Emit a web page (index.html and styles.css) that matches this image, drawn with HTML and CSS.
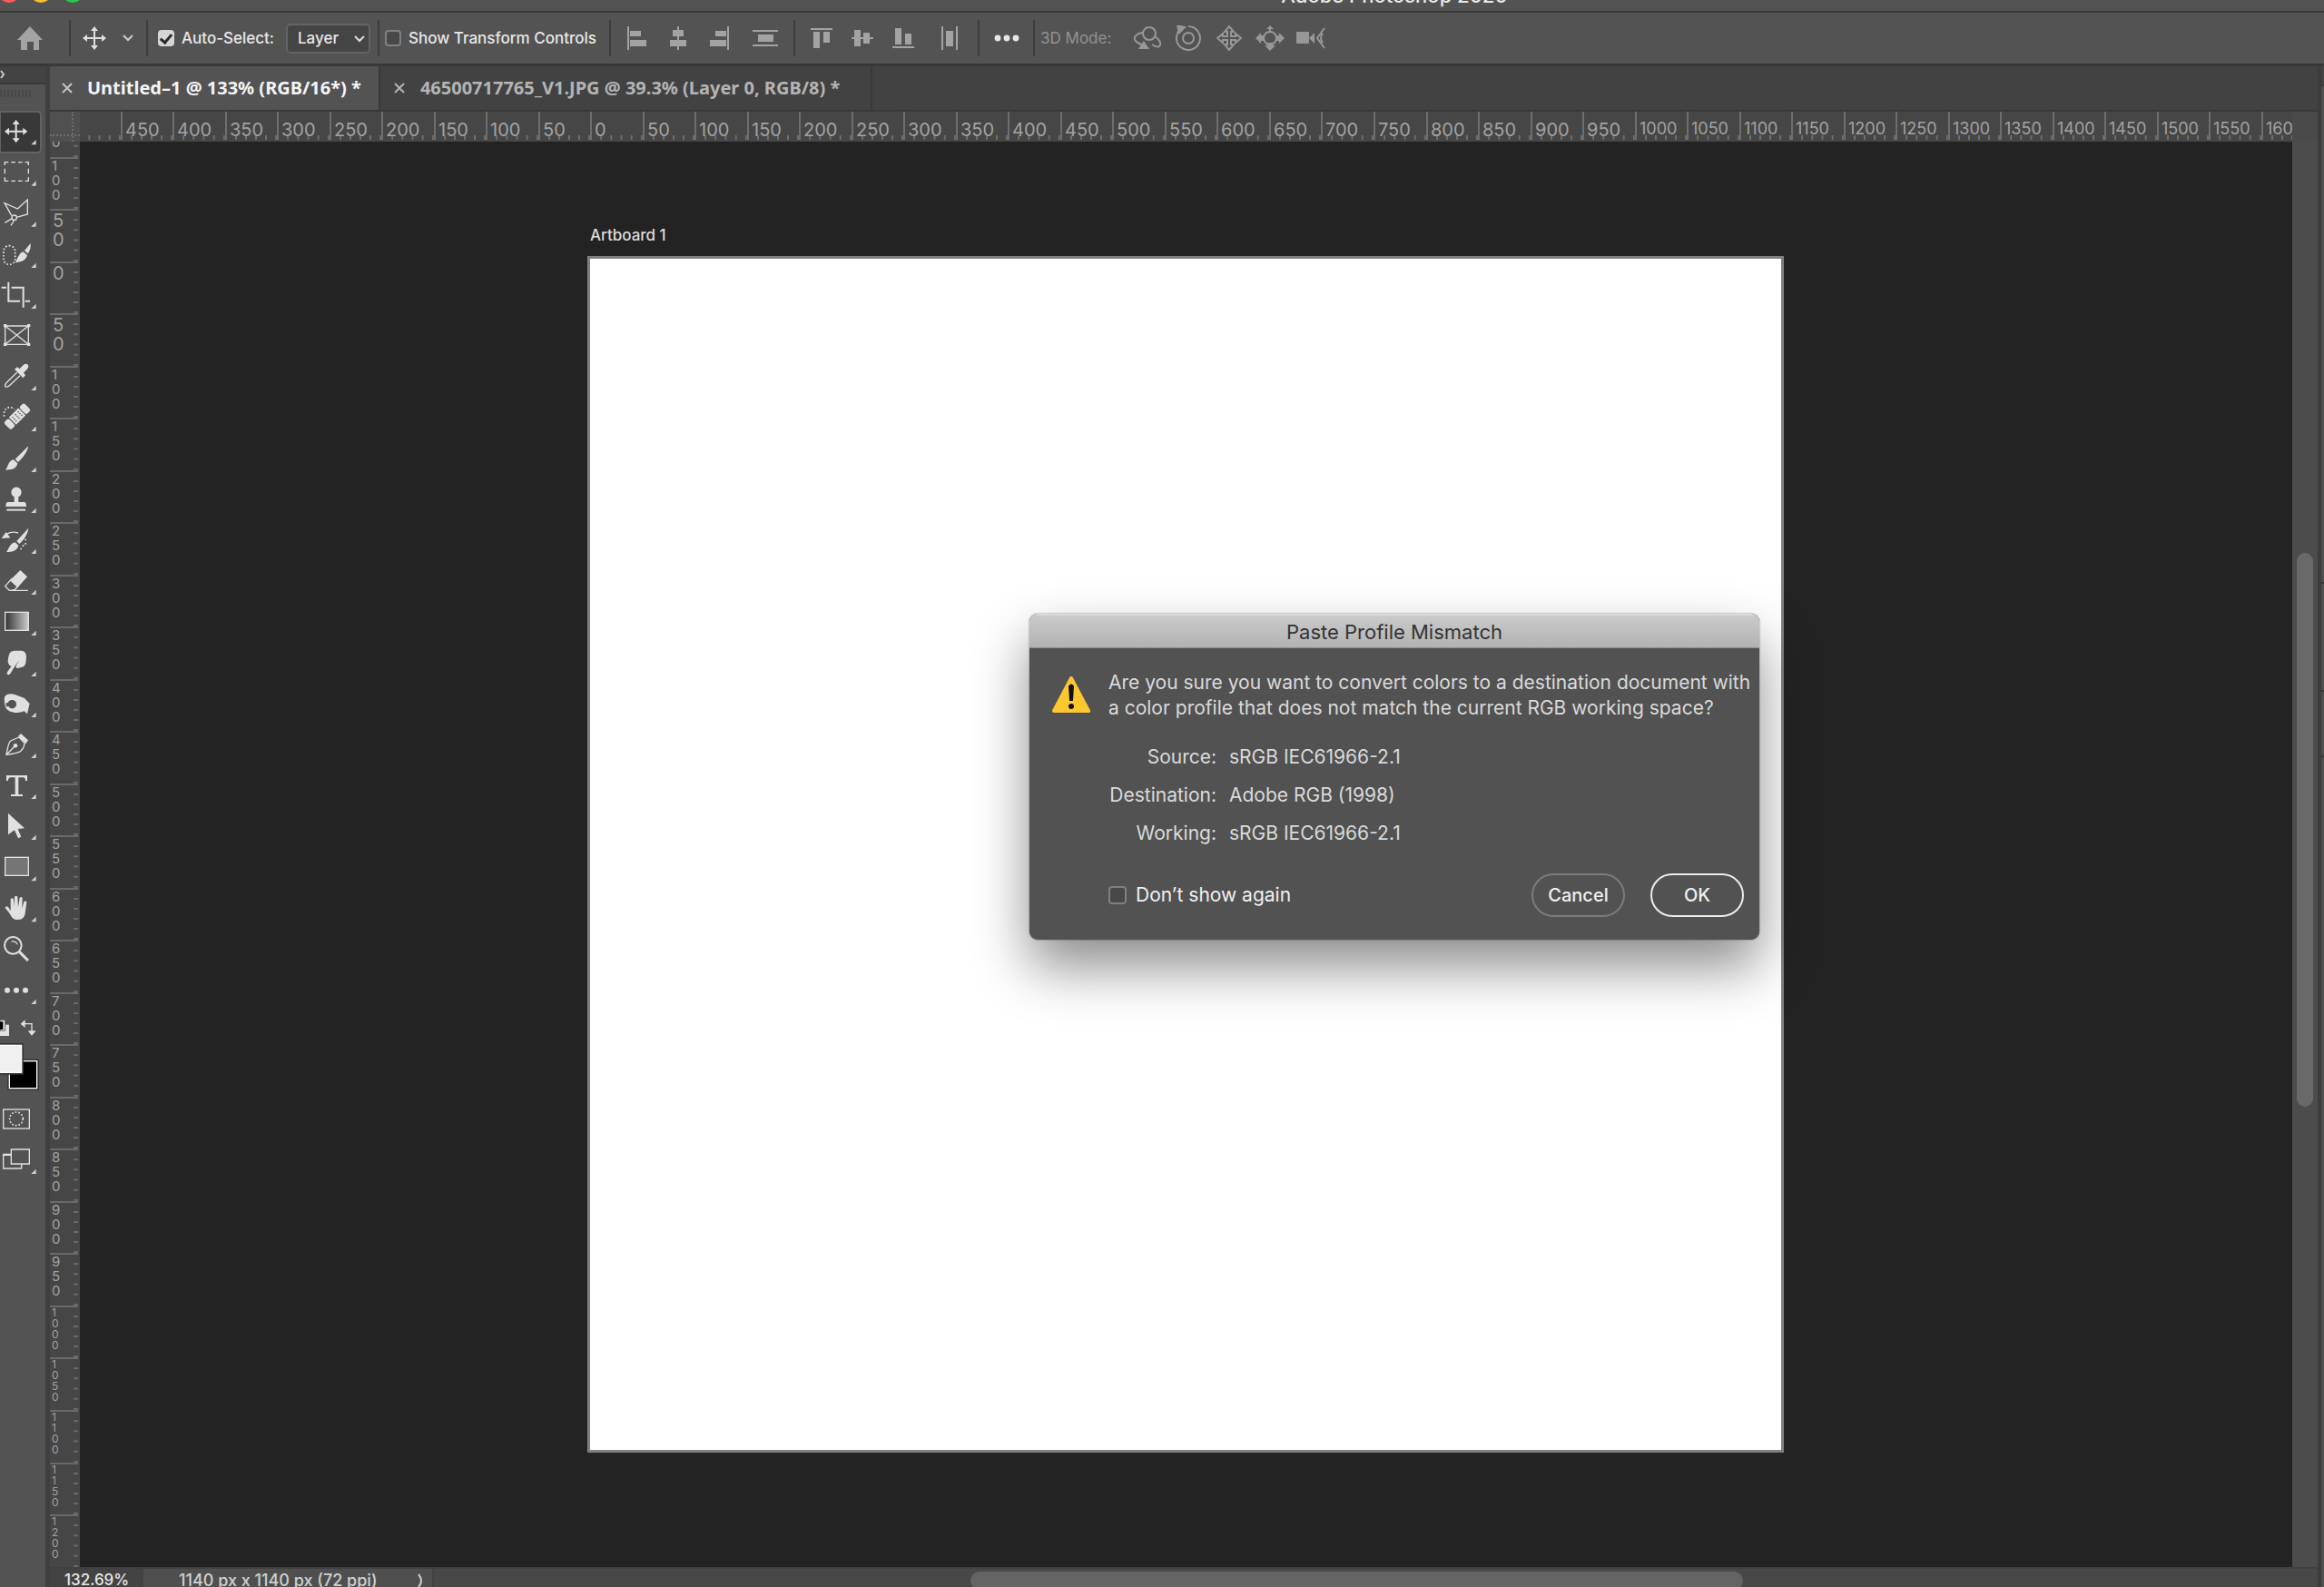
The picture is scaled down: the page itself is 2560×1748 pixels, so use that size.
FILE: index.html
```html
<!DOCTYPE html>
<html lang="en">
<head>
<meta charset="utf-8">
<title>Adobe Photoshop 2020</title>
<link rel="stylesheet" href="styles.css">
</head>
<body>
<header class="titlebar">
  <div class="titlebar-inner">
    <div class="lights"><i class="light red"></i><i class="light yellow"></i><i class="light green"></i></div>
    <h1 class="app-title">Adobe Photoshop 2020</h1>
  </div>
</header>

<div class="options">
  <button class="opt home" aria-label="Home"><svg width="28" height="28" viewBox="0 0 28 28"><path fill="#a3a3a3" d="M14 1 28 16h-4v11h-6v-9h-7v9H4V16H0z"/></svg></button>
  <i class="sep"></i>
  <button class="opt move" aria-label="Move tool"><svg width="26" height="26" viewBox="0 0 26 26"><path fill="#e0e0e0" d="M13 0l4 5h-3v7h7V9l5 4-5 4v-3h-7v7h3l-4 5-4-5h3v-7H5v3l-5-4 5-4v3h7V5H9z"/></svg></button>
  <button class="opt preset" aria-label="Tool presets"><svg width="12" height="8" viewBox="0 0 12 8"><path d="M1 1l5 5 5-5" fill="none" stroke="#ccc" stroke-width="2"/></svg></button>
  <i class="sep"></i>
  <label class="check auto"><input type="checkbox" checked>Auto-Select:</label>
  <div class="select-wrap">
    <select class="layer-select" aria-label="Auto-select target"><option>Layer</option><option>Group</option></select>
    <svg class="select-arrow" width="12" height="8" viewBox="0 0 12 8"><path d="M1 1l5 5 5-5" fill="none" stroke="#ddd" stroke-width="2"/></svg>
  </div>
  <i class="sep"></i>
  <label class="check transform"><input type="checkbox">Show Transform Controls</label>
  <i class="sep"></i>
  <div class="group align-h">
    <button class="opt icon" aria-label="Align left edges"><svg width="26" height="26" viewBox="0 0 26 26" fill="#a3a3a3"><path d="M2 0h2v26H2zM5 5h12v6H5zM5 15h18v7H5z"/></svg></button>
    <button class="opt icon" aria-label="Align horizontal centers"><svg width="26" height="26" viewBox="0 0 26 26" fill="#a3a3a3"><path d="M12 0h2v26h-2zM7 4h12v7H7zM4 15h18v7H4z"/></svg></button>
    <button class="opt icon" aria-label="Align right edges"><svg width="26" height="26" viewBox="0 0 26 26" fill="#a3a3a3"><path d="M22 0h2v26h-2zM9 5h12v6H9zM3 15h18v7H3z"/></svg></button>
    <button class="opt icon wide" aria-label="Distribute vertically"><svg width="28" height="26" viewBox="0 0 28 26" fill="#a3a3a3"><path d="M0 4h28v2H0zM0 20h28v2H0zM6 9h17v8H6z"/></svg></button>
  </div>
  <i class="sep"></i>
  <div class="group align-v">
    <button class="opt icon" aria-label="Align top edges"><svg width="26" height="26" viewBox="0 0 26 26" fill="#a3a3a3"><path d="M1 2h24v2H1zM4 6h7v18H4zM15 6h7v12h-7z"/></svg></button>
    <button class="opt icon" aria-label="Align vertical centers"><svg width="26" height="26" viewBox="0 0 26 26" fill="#a3a3a3"><path d="M1 12h24v2H1zM4 4h7v18H4zM14 7h7v12h-7z"/></svg></button>
    <button class="opt icon" aria-label="Align bottom edges"><svg width="26" height="26" viewBox="0 0 26 26" fill="#a3a3a3"><path d="M1 22h24v2H1zM4 2h7v18H4zM15 8h7v12h-7z"/></svg></button>
    <button class="opt icon wide" aria-label="Distribute horizontally"><svg width="26" height="26" viewBox="0 0 26 26" fill="#a3a3a3"><path d="M4 0h2v26H4zM20 0h2v26h-2zM9 5h8v17H9z"/></svg></button>
  </div>
  <i class="sep"></i>
  <button class="opt more" aria-label="More options"><svg width="28" height="8" viewBox="0 0 28 8" fill="#e6e6e6"><circle cx="4" cy="4" r="3.4"/><circle cx="14" cy="4" r="3.4"/><circle cx="24" cy="4" r="3.4"/></svg></button>
  <i class="sep"></i>
  <span class="mode-label">3D Mode:</span>
  <div class="group mode">
    <button class="opt icon" aria-label="Orbit"><svg width="32" height="28" viewBox="0 0 32 28" fill="none" stroke="#979797" stroke-width="2"><circle cx="18" cy="9" r="7"/><path d="M11 8C3 9-1 14 4 18c2 2 5 3 8 4M24 12c5 3 8 8 5 11-2 1-5 0-8-2"/><path d="M12 17l6 9H6z" fill="#979797" stroke="none"/></svg></button>
    <button class="opt icon" aria-label="Roll"><svg width="30" height="28" viewBox="0 0 30 28" fill="none" stroke="#979797" stroke-width="2"><circle cx="15" cy="14" r="6"/><path d="M8 3a13 13 0 1 0 7-2"/><path d="M3 0l8 2-6 6z" fill="#979797"/></svg></button>
    <button class="opt icon" aria-label="Pan"><svg width="28" height="28" viewBox="0 0 28 28" fill="none" stroke="#979797" stroke-width="2"><path d="M14 1l5 6h-3v5h5V9l6 5-6 5v-3h-5v5h3l-5 6-5-6h3v-5H7v3l-6-5 6-5v3h5V7H9z"/></svg></button>
    <button class="opt icon" aria-label="Slide"><svg width="32" height="28" viewBox="0 0 32 28" fill="#979797"><circle cx="16" cy="14" r="7" fill="none" stroke="#979797" stroke-width="2"/><path d="M16 0l4 4h-3v3h-2V4h-3zM16 28l-6-6h3v-3h6v3h3zM0 14l6-6v3h3v6H6v3zM32 14l-6-6v3h-3v6h3v3z"/></svg></button>
    <button class="opt icon" aria-label="Camera"><svg width="32" height="24" viewBox="0 0 32 24" fill="#979797"><rect y="5" width="14" height="13" rx="1"/><path d="M14 12l6-6v12z"/><path d="M31 1l-8 11 8 11M29 7q-4 5 0 10" fill="none" stroke="#979797" stroke-width="2"/></svg></button>
  </div>
</div>

<main class="workspace">
  <aside class="toolbar">
    <div class="toolbar-head"><svg width="6" height="10" viewBox="0 0 6 10"><path d="M1 1l3 4-3 4" fill="none" stroke="#ccc" stroke-width="2"/></svg></div>
    <div class="grip"></div>
    <button class="tool active" aria-label="Move"><svg viewBox="0 0 135 135"><path fill="#e0e0e0" d="M53 27l12 15h-9v20h20v-9l15 12-15 12v-9H56v20h9l-12 15-12-15h9V68H30v9L15 65l15-12v9h20V42h-9z"/><path class="tri" d="M119 93v16h-16z"/></svg></button>
    <button class="tool" aria-label="Rectangular marquee"><svg viewBox="0 0 135 135"><path class="ln" d="M16 42V32h12M37 32h14M60 32h14M83 32h11v10M94 53v17M94 82v12H83M74 94H60M51 94H37M28 94H16V82M16 70V53"/><path class="tri" d="M119 94v16h-16z"/></svg></button>
    <button class="tool" aria-label="Polygonal lasso"><svg viewBox="0 0 135 135"><path class="ln" d="M38 73L15 32l43 19 33-30v48L55 79M16 97l24-14M36 106l10-16"/><circle class="ln" cx="47" cy="80" r="8"/><path class="tri" d="M119 94v16h-16z"/></svg></button>
    <button class="tool" aria-label="Quick selection"><svg viewBox="0 0 135 135"><rect class="dots" x="12" y="38" width="38" height="62" rx="18"/><path class="fl" d="M101 30L81 54l11 10c8-10 10-22 9-34zM77 58l13 11c-4 18-22 24-40 24 9-9 10-30 27-35z"/><path class="tri" d="M119 95v16h-16z"/></svg></button>
    <button class="tool" aria-label="Crop"><svg viewBox="0 0 135 135"><path d="M5 41h16M28 23v63h38M83 86h16M38 41h39v66" fill="none" stroke="#e0e0e0" stroke-width="6"/><path class="tri" d="M119 95v16h-16z"/></svg></button>
    <button class="tool" aria-label="Frame"><svg viewBox="0 0 135 135"><path class="ln" d="M17 33h77v61H17zM17 33l77 61M94 33L17 94"/><path class="fl" d="M12 27h10v10H12zM90 27h10v10H90zM12 89h10v10H12zM90 89h10v10H90z"/></svg></button>
    <button class="tool" aria-label="Eyedropper"><svg viewBox="0 0 135 135"><path class="ln" d="M56 52L21 86c-5 6-5 10-3 12s8 2 13-3l35-33"/><path class="fl" d="M48 41l9-7 8 6 12-13c12-10 22 2 14 12L78 53l6 8-8 9z"/><path class="tri" d="M119 95v16h-16z"/></svg></button>
    <button class="tool" aria-label="Healing brush"><svg viewBox="0 0 135 135"><path class="dots" d="M14 62c-4-16 6-30 18-30 7 0 12 3 15 7"/><g transform="rotate(-45 57 62)"><rect class="fl" x="10" y="45" width="22" height="34" rx="7"/><rect class="fl" x="35" y="45" width="44" height="34"/><rect class="fl" x="82" y="45" width="22" height="34" rx="7"/><path d="M42 54h32M42 62h32M42 70h32" stroke="#535353" stroke-width="4" stroke-dasharray="4 9"/></g><path class="tri" d="M119 95v16h-16z"/></svg></button>
    <button class="tool" aria-label="Brush"><svg viewBox="0 0 135 135"><path class="fl" d="M94 25L50 68l10 10c16-15 30-32 34-53zM45 70l13 12c-4 20-22 22-40 22 9-9 8-31 27-34z"/><path class="tri" d="M119 95v16h-16z"/></svg></button>
    <button class="tool" aria-label="Clone stamp"><svg viewBox="0 0 135 135"><path class="fl" d="M47 75V58a17 17 0 1 1 14 0v17h20q6 2 6 15H19q0-13 6-15z"/><path class="fl" d="M22 98h62v6H22z"/><path class="tri" d="M119 95v16h-16z"/></svg></button>
    <button class="tool" aria-label="History brush"><svg viewBox="0 0 135 135"><path class="fl" d="M94 26L55 69l9 9c16-15 28-32 30-52zM50 73l11 10c-4 19-22 22-40 22 9-9 10-28 29-32zM5 60l15-21 14 19z"/><path class="ln" d="M22 46c12-8 26-8 38-4"/><path class="fl" d="M82 62h5v5h-5zM82 75h5v5h-5zM74 82h5v5h-5zM67 92h5v5h-5z"/><path class="tri" d="M119 95v16h-16z"/></svg></button>
    <button class="tool" aria-label="Eraser"><svg viewBox="0 0 135 135"><path class="fl" d="M67 30l23 22-32 36-25-24z"/><path class="ln" d="M40 57L17 83l14 14h62M35 97l14-3 12-12"/><path class="tri" d="M119 95v16h-16z"/></svg></button>
    <button class="tool" aria-label="Gradient"><svg viewBox="0 0 135 135"><defs><linearGradient id="g"><stop stop-color="#333"/><stop offset="1" stop-color="#ccc"/></linearGradient></defs><rect x="17" y="34" width="77" height="60" fill="url(#g)" stroke="#e0e0e0" stroke-width="4"/><path class="tri" d="M119 95v16h-16z"/></svg></button>
    <button class="tool" aria-label="Smudge"><svg viewBox="0 0 135 135"><path class="fl" d="M26 62c2-20 4-34 20-36h26c16 2 16 20 14 32 0 12-4 24-20 24-12 6-16-2-12-8l10-16-14 18-16 26c-6 8-14 2-10-5l14-20c-6 0-10-6-12-15z"/><path class="tri" d="M119 95v16h-16z"/></svg></button>
    <button class="tool" aria-label="Sponge"><svg viewBox="0 0 135 135"><path class="fl" fill-rule="evenodd" d="M15 44c6-10 20-12 34-8l32 12 17 18-8 34-10-9c-24 10-54 4-62-14-4-12-4-22-3-33zM39 54a14 13 0 0 0-13 10l-6-2v14l8-1a14 14 0 1 0 11-21z"/><path class="tri" d="M119 95v16h-16z"/></svg></button>
    <button class="tool" aria-label="Pen"><svg viewBox="0 0 135 135"><path class="ln" d="M21 100c4-20 6-40 14-46l28-12 18 20c-2 20-10 26-20 30s-26 6-40 8zM23 98l26-27"/><circle class="fl" cx="51" cy="70" r="7"/><path class="fl" d="M60 38l9-8 24 22-8 12z"/><path class="tri" d="M119 95v16h-16z"/></svg></button>
    <button class="tool" aria-label="Type"><svg viewBox="0 0 135 135"><path class="fl" d="M21 33h69v18h-6q0-11-8-11H61v56h14v6H36v-6h14V40H35q-8 0-8 11h-6z"/><path class="tri" d="M119 95v16h-16z"/></svg></button>
    <button class="tool" aria-label="Path selection"><svg viewBox="0 0 135 135"><path class="fl" d="M27 23l54 50-22 2 11 26-10 5-12-27-21 15z"/><path class="tri" d="M119 95v16h-16z"/></svg></button>
    <button class="tool" aria-label="Rectangle"><svg viewBox="0 0 135 135"><rect x="17" y="34" width="77" height="60" fill="#757575" stroke="#e0e0e0" stroke-width="4"/><path class="tri" d="M119 96v16h-16z"/></svg></button>
    <button class="tool" aria-label="Hand"><svg viewBox="0 0 135 135"><path class="fl" d="M35 76V38q5-8 10 0l3 24V30q5-8 10 0l2 32 5-29q5-7 9 1l-1 34 6-22q6-5 9 1l-5 38c-3 16-12 20-24 20-18 0-22-12-28-22L17 66q2-9 10-3z"/><path class="tri" d="M119 96v16h-16z"/></svg></button>
    <button class="tool" aria-label="Zoom"><svg viewBox="0 0 135 135"><circle cx="43" cy="55" r="28" fill="none" stroke="#e0e0e0" stroke-width="6"/><path d="M38 42q14-3 20 10" class="ln"/><path d="M64 76l29 29" stroke="#e0e0e0" stroke-width="9"/></svg></button>
    <button class="tool" aria-label="Edit toolbar"><svg viewBox="0 0 135 135"><circle class="fl" cx="24" cy="68" r="9"/><circle class="fl" cx="54" cy="68" r="9"/><circle class="fl" cx="84" cy="68" r="9"/><path class="tri" d="M119 98v16h-16z"/></svg></button>
    <button class="swatches" aria-label="Foreground and background colors"><svg viewBox="0 0 135 288"><path class="fl" d="M0 47h30v37H0z"/><path d="M0 31h17v36H0z" fill="#e0e0e0" stroke="#444" stroke-width="2"/><path d="M0 37h10v26H0z" fill="#000"/><path class="ln" d="M78 44h27v30"/><path class="fl" d="M68 44l15-13v26zM105 83L92 67h27z"/><rect x="25" y="161" width="104" height="102" fill="#333"/><rect x="31" y="167" width="91" height="90" fill="#000" stroke="#fff" stroke-width="4"/><path d="M0 108h78v104H0z" fill="#333"/><path d="M0 113h73v94H0z" fill="#fff"/><path d="M0 117h69v86H0z" fill="#f0f0f0"/></svg></button>
    <button class="tool" aria-label="Quick mask"><svg viewBox="0 0 135 135"><rect class="ln" x="11" y="39" width="86" height="63"/><circle class="dots" cx="54" cy="70" r="22"/></svg></button>
    <button class="tool" aria-label="Screen mode"><svg viewBox="0 0 135 135"><path class="ln" d="M37 36h60v48H37z"/><path class="ln" d="M37 53H11v46h60V84"/><path d="M9 50h28v7H9z" class="fl"/><path class="tri" d="M119 101v16h-16z"/></svg></button>
  </aside>

  <section class="document">
    <nav class="tabs">
      <div class="tab current"><button class="close" aria-label="Close tab"><svg width="12" height="12" viewBox="0 0 12 12"><path d="M1 1l10 10M11 1L1 11" stroke="#c4c4c4" stroke-width="2"/></svg></button><a href="#doc1">Untitled–1 @ 133% (RGB/16*) *</a></div>
      <div class="tab second-tab"><button class="close" aria-label="Close tab"><svg width="12" height="12" viewBox="0 0 12 12"><path d="M1 1l10 10M11 1L1 11" stroke="#b4b4b4" stroke-width="2"/></svg></button><a href="#doc2">46500717765_V1.JPG @ 39.3% (Layer 0, RGB/8) *</a></div>
    </nav>
    <div class="view">
      <div class="corner"></div>
      <div class="ruler ruler-h" id="ruler-h"></div>
      <div class="ruler-end"></div>
      <div class="ruler ruler-v" id="ruler-v"></div>
      <div class="canvas"><div class="artboard"><span class="artboard-name">Artboard 1</span></div></div>
      <div class="scroll-v"><i class="thumb-v"></i></div>
    </div>
    <footer class="status">
      <span class="zoom-level">132.69%</span>
      <span class="doc-info">1140 px x 1140 px (72 ppi)<svg width="8" height="16" viewBox="0 0 8 16"><path d="M1 1q6 7 0 14" fill="none" stroke="#ccc" stroke-width="2"/></svg></span>
      <div class="scroll-h"><i class="thumb-h"></i></div>
    </footer>
  </section>
  <aside class="dock"><i class="panel head"></i><i class="panel first"></i><i class="panel second"></i><i class="panel third"></i></aside>
</main>

<div class="dialog" role="dialog" aria-labelledby="dlg-title">
  <h2 class="dialog-title" id="dlg-title">Paste Profile Mismatch</h2>
  <div class="dialog-body">
    <svg class="warning" width="44" height="42" viewBox="0 0 44 42"><path d="M22 3L41 39H3z" fill="#fdc72f" stroke="#fdc72f" stroke-width="4" stroke-linejoin="round"/><path d="M20 12q2-3 4 0l-1 15h-2z" fill="#111" stroke="#111" stroke-width="2"/><circle cx="22" cy="34" r="3" fill="#111"/></svg>
    <div class="dialog-content">
      <p class="message">Are you sure you want to convert colors to a destination document with<br>a color profile that does not match the current RGB working space?</p>
      <dl class="profiles">
        <dt>Source:</dt><dd>sRGB IEC61966-2.1</dd>
        <dt>Destination:</dt><dd>Adobe RGB (1998)</dd>
        <dt>Working:</dt><dd>sRGB IEC61966-2.1</dd>
      </dl>
      <div class="dialog-actions">
        <label class="check again"><input type="checkbox">Don’t show again</label>
        <button class="pill">Cancel</button>
        <button class="pill primary">OK</button>
      </div>
    </div>
  </div>
</div>
<script src="rulers.js"></script>
</body>
</html>
```
FILE: styles.css
```css
* { box-sizing: border-box; }

body {
  margin: 0;
  height: 100vh;
  display: flex;
  flex-direction: column;
  overflow: hidden;
  background: #535353;
  color: #e8e8e8;
  font: 500 17px/24px Inter, "Liberation Sans", sans-serif;
}

button { padding: 0; border: 0; background: none; color: inherit; font: inherit; }
svg { display: block; flex: none; }
a { color: inherit; text-decoration: none; }

/* title bar */
.titlebar { flex: none; height: 12px; display: flex; align-items: flex-end; overflow: hidden; }
.titlebar-inner { flex: 1; height: 42px; display: flex; align-items: center; }
.lights { flex: none; display: flex; gap: 11px; margin-left: -2px; }
.light { width: 24px; height: 24px; border-radius: 50%; }
.red { background: #fc5b57; }
.yellow { background: #fdbe2f; }
.green { background: #2aca42; }
.app-title { flex: 1; margin: 0; padding: 8px 0 0 calc(20% - 92px); text-align: center; font-size: 22px; line-height: 28px; font-weight: 500; white-space: nowrap; }

/* options bar */
.options { flex: none; height: 61px; display: flex; align-items: center; border-top: 2px solid #393939; border-bottom: 3px solid #393939; }
.opt { flex: none; display: flex; align-items: center; justify-content: center; height: 40px; }
.sep { flex: none; width: 2px; height: 40px; background: #3d3d3d; }
.home { width: 76px; padding-right: 11px; }
.move { width: 52px; }
.preset { width: 31px; padding-right: 10px; }
.check { display: flex; align-items: center; white-space: nowrap; }
.check input {
  appearance: none; flex: none; margin: 0 8px 0 0; width: 18px; height: 18px;
  border: 2px solid #808080; border-radius: 4px; background: #484848;
}
.check input:checked { border-color: #d6d6d6; background: #d6d6d6; display: grid; place-items: center; }
.check input:checked::after { content: ""; width: 5px; height: 10px; margin-bottom: 3px; border: solid #2b2b2b; border-width: 0 3px 3px 0; transform: rotate(40deg); }
.auto { width: 152px; padding-left: 11px; }
.select-wrap { position: relative; flex: none; width: 101px; padding-right: 8px; }
.layer-select { appearance: none; display: block; width: 93px; height: 33px; padding: 0 11px; border: 2px solid #646464; border-radius: 5px; background: #454545; color: #e8e8e8; font: inherit; line-height: 28px; }
.select-arrow { position: absolute; right: 14px; top: 13px; }
.transform { width: 253px; padding-left: 6px; }
.group { display: flex; }
.icon { width: 45px; }
.align-h { padding-left: 6px; width: 201px; }
.wide { width: 58px; }
.align-v { width: 201px; padding-left: 6px; }
.more { width: 59px; }
.mode-label { width: 101px; padding-left: 6px; color: #929292; font-weight: 400; white-space: nowrap; }

/* workspace */
.workspace { flex: 1; min-height: 0; display: flex; background: #535353; }
.toolbar { flex: none; width: 55px; display: flex; flex-direction: column; border-right: 5px solid #3f3f3f; }
.toolbar-head { flex: none; height: 20px; padding-top: 4px; background: #434343; border-bottom: 2px solid #3a3a3a; }
.grip { flex: none; width: 34px; height: 8px; margin: 6px 0 16px; background: repeating-linear-gradient(to right, #484848 0 2px, #535353 2px 4px); }
.tool { flex: none; width: 50px; height: 45px; }
.tool svg { width: 45px; height: 45px; }
.tool.active svg { background: #383838; outline: 2px solid #626262; outline-offset: -1px; border-radius: 0 4px 4px 0; }
.swatches { flex: none; width: 50px; height: 96px; }
.swatches svg { width: 45px; height: 96px; }
.ln { fill: none; stroke: #e0e0e0; stroke-width: 4; }
.dots { fill: none; stroke: #e8e8e8; stroke-width: 5; stroke-dasharray: 5 6; }
.fl { fill: #e0e0e0; }
.tri { fill: #d0d0d0; }

.document { flex: 1; min-width: 0; display: flex; flex-direction: column; }
.tabs { flex: none; display: flex; height: 50px; background: #424242; border-bottom: 2px solid #393939; }
.tab { display: flex; align-items: center; gap: 16px; padding: 0 19px 0 13px; border-right: 2px solid #393939; color: #b4b4b4; font: 700 20px/24px "Noto Sans", "Open Sans", sans-serif; white-space: nowrap; }
.tab.current { background: #535353; color: #f4f4f4; }
.second-tab { min-width: 542px; padding-left: 15px; gap: 17px; }
.close { flex: none; }

.view { flex: 1; min-height: 0; display: grid; grid-template: 33px minmax(0, 1fr) / 33px minmax(0, 1fr) 28px; }
.ruler, .ruler-end { background: #464646; color: #a2a2a2; font-weight: 400; }
.ruler { display: flex; overflow: hidden; }
.ruler-end { background: #4a4a4a; }
.corner { background: #505050; position: relative; }
.corner::before { content: ""; position: absolute; inset: 0 7px 0 auto; border-right: 2px dotted #6c6c6c; }
.corner::after { content: ""; position: absolute; inset: auto 0 6px 0; border-bottom: 2px dotted #6c6c6c; }
.ruler-h { padding-bottom: 2px; }
.ruler-v { flex-direction: column; padding-right: 2px; }
.cell { flex: none; }
.ruler-h .cell { border-left: 2px solid #6e6e6e; padding-left: 3px; font-size: 20px; line-height: 40px; background: linear-gradient(to right, #6e6e6e 2px, transparent 2px) -2px 100% / 20% 5px repeat-x; }
.ruler-h .cell:first-child { margin-left: -13px; }
.ruler-h .long { font-size: 18px; line-height: 37px; }
.ruler-v .cell { border-top: 2px solid #6a6a6a; padding: 1px 0 0 3px; font-size: 20px; line-height: 21px; background: linear-gradient(#6a6a6a 2px, transparent 2px) 100% -2px / 5px 20% repeat-y; }
.ruler-v .cell:first-child { margin-top: -41px; }
.ruler-v .mid { padding: 0 0 0 2px; font-size: 15px; line-height: 16px; }
.ruler-v .long { padding: 0 0 0 2px; font-size: 12px; line-height: 12px; }
.cell span { display: block; }

.canvas { display: grid; place-items: center; padding-right: 1px; background: #232323; overflow: hidden; }
.artboard { position: relative; width: 1318px; height: 1318px; border: 3px solid #808080; background: #fff; }
.artboard-name { position: absolute; left: 0; bottom: 100%; margin-bottom: 14px; font-size: 17px; line-height: 24px; color: #dcdcdc; white-space: nowrap; }
.scroll-v { padding: 453px 5px 0; background: #4c4c4c; }
.thumb-v { display: block; height: 610px; border-radius: 9px; background: #696969; }

.status { flex: none; height: 22px; display: flex; background: #484848; border-top: 2px solid #404040; overflow: hidden; line-height: 25px; }
.zoom-level { flex: none; width: 103px; padding-left: 16px; background: #434343; }
.doc-info { flex: none; width: 320px; padding: 0 8px 0 39px; display: flex; justify-content: space-between; background: #4f4f4f; border-right: 2px solid #424242; color: #d0d0d0; font-size: 18px; }
.doc-info svg { margin-top: 5px; }
.scroll-h { flex: 1; padding: 3px 0 0 591px; }
.thumb-h { display: block; width: 851px; height: 20px; border-radius: 10px; background: #646464; }

.dock { flex: none; width: 7px; display: flex; flex-direction: column; border-left: 4px solid #3c3c3c; background: #4e4e4e; }
.panel { flex: none; border-bottom: 2px solid #393939; }
.head { height: 22px; background: #434343; }
.first { height: 548px; }
.second { height: 119px; }
.third { height: 72px; }

/* dialog */
.dialog { position: absolute; left: 60%; top: 676px; width: 804px; margin-left: -402px; border-radius: 9px; background: #525252; color: #dadada; font-size: 21px; font-weight: 400; box-shadow: 0 0 2px rgba(0,0,0,.5), 0 30px 60px rgba(0,0,0,.45); overflow: hidden; }
.dialog-title { margin: 0; height: 38px; background: linear-gradient(#cacaca, #b2b2b2); border-top: 2px solid #dadada; border-bottom: 1px solid #8c8c8c; color: #333; text-align: center; font-size: 22px; line-height: 36px; font-weight: 400; }
.dialog-body { display: flex; gap: 19px; padding: 24px 17px 25px 24px; }
.warning { margin-top: 6px; }
.dialog-content { flex: 1; min-width: 0; }
.message { margin: 0; line-height: 28px; white-space: nowrap; }
.profiles { margin: 19px 0 0; display: grid; grid-template-columns: 119px 1fr; column-gap: 14px; line-height: 42px; }
.profiles dt { text-align: right; }
.profiles dd { margin: 0; }
.dialog-actions { display: flex; align-items: center; margin-top: 23px; color: #f0f0f0; }
.again { margin-right: auto; }
.again input { width: 20px; height: 20px; margin-right: 10px; }
.pill { width: 103px; height: 48px; margin-left: 28px; border: 2px solid #7c7c7c; border-radius: 24px; font-size: 20px; font-weight: 500; }
.pill.primary { border-color: #ececec; }
```
FILE: rulers.js
```js
// Builds one cell per 50 px of artboard, each as long as 50 px are on screen at this zoom.
const STEP = 57.52;

function buildRuler(id, first, last, side) {
  const ruler = document.getElementById(id);
  const count = (last - first) / 50;
  for (let i = 0; i <= count; i++) {
    const value = Math.abs(first + i * 50);
    const text = String(value);
    const cell = document.createElement('div');
    cell.className = 'cell' + (text.length > 3 ? ' long' : text.length === 3 ? ' mid' : '');
    cell.style[side] = Math.round((i + 1) * STEP) - Math.round(i * STEP) + 'px';
    if (side === 'height') {
      for (const digit of text) {
        const span = document.createElement('span');
        span.textContent = digit;
        cell.append(span);
      }
    } else if (i > 0) {
      cell.textContent = text;
    }
    ruler.append(cell);
  }
}

buildRuler('ruler-h', -500, 1600, 'width');
buildRuler('ruler-v', -150, 1200, 'height');
```
